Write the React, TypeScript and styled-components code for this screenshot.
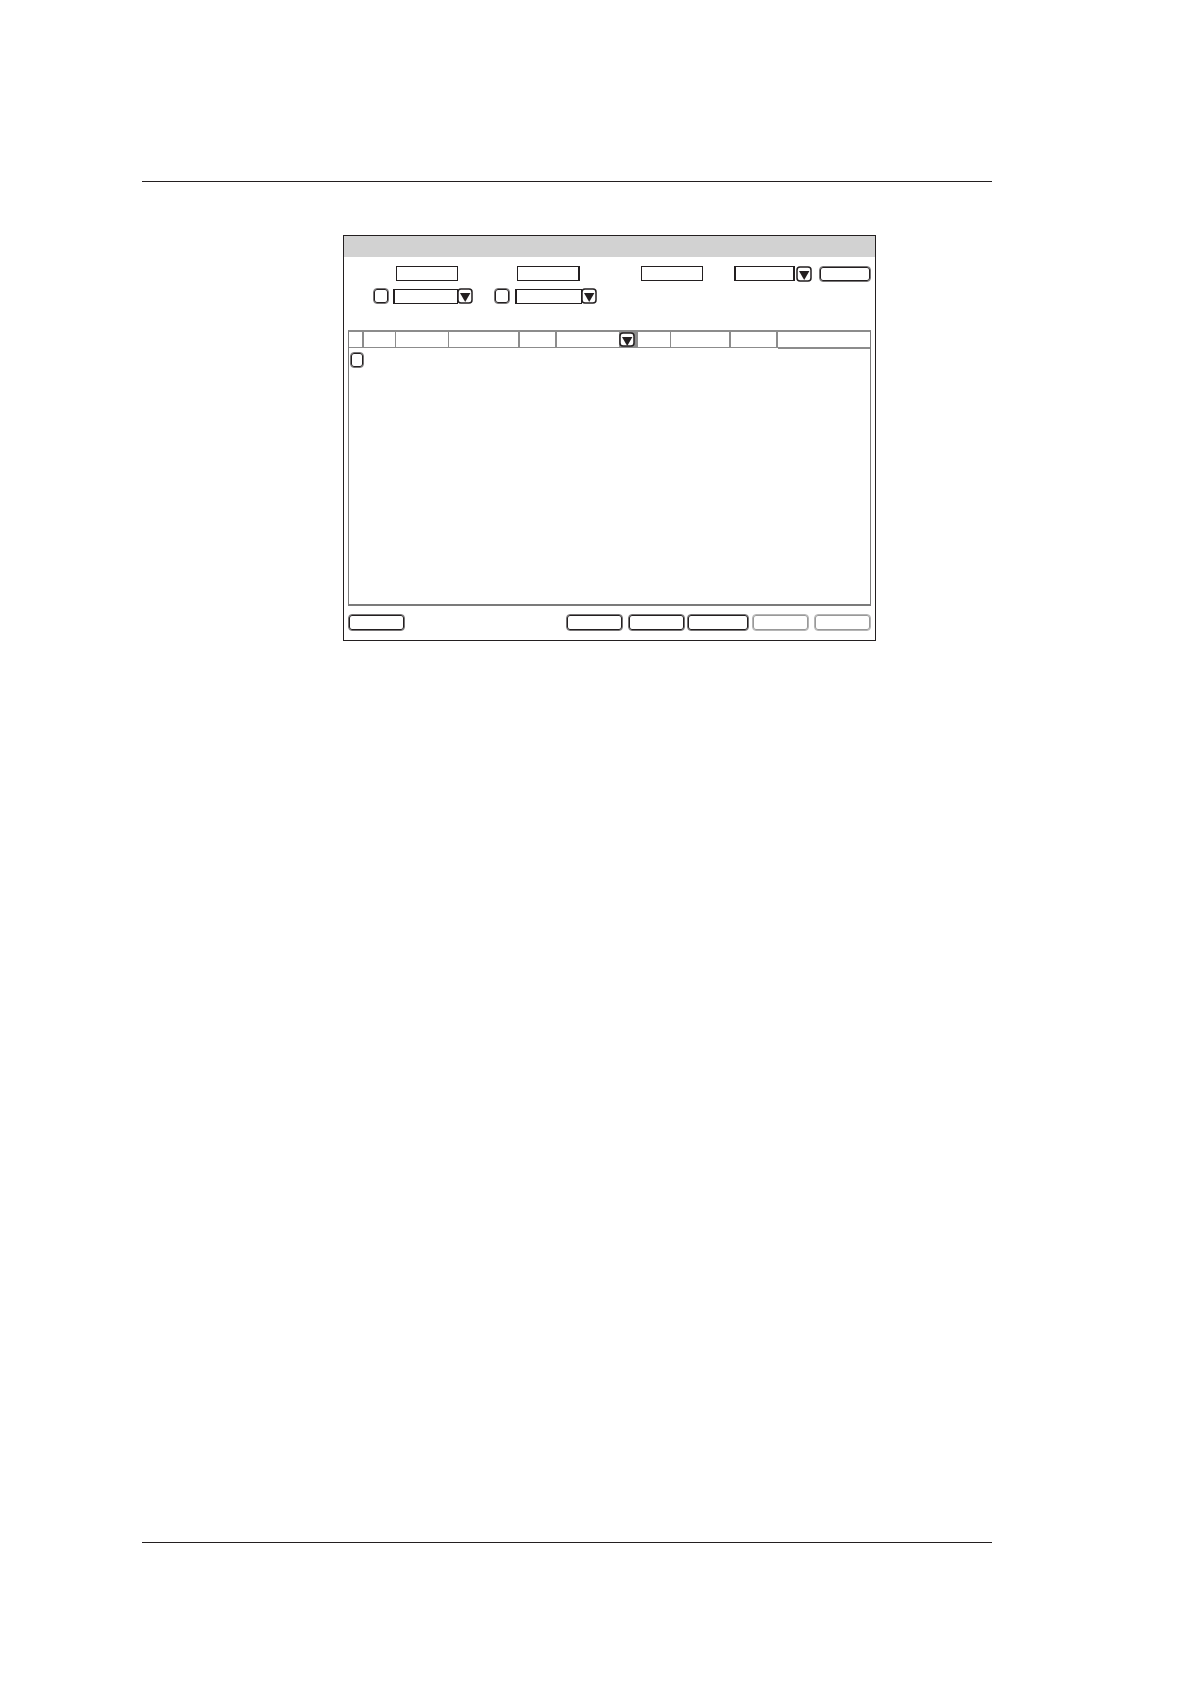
import React from "react";
import styled, { createGlobalStyle } from "styled-components";

const ink = "#231f20";
const soft = "#777576";
const line = "#8c8c8c";

const GlobalStyle = createGlobalStyle`
  *, *::before, *::after { box-sizing: border-box; }
  body { margin: 0; background: #fff; font-family: "Liberation Sans", Arial, sans-serif; font-size: 10px; }
`;

const Sheet = styled.div`
  display: flex;
  flex-direction: column;
  min-height: 100vh;
  padding: 181px 199px 141px 142px;
`;

const Rule = styled.hr`
  width: 100%;
  height: 1px;
  margin: 0;
  border: 0;
  background: ${ink};
`;

const Content = styled.main`
  flex: 1;
  padding: 53px 116px 0 201px;
`;

const Dialog = styled.section`
  border: 1px solid ${ink};
  background: #fff;
`;

const TitleBar = styled.header`
  height: 21px;
  background: #d2d2d2;
`;

const Filters = styled.form`
  display: grid;
  row-gap: 6px;
  padding: 9px 4px 26px;
`;

const FilterRow = styled.div<{ $columns: string; $align: "start" | "end" }>`
  display: grid;
  grid-template-columns: ${(p) => p.$columns};
  align-items: ${(p) => p.$align};
  height: 16px;
`;

const Cell = styled.div<{ $column: string }>`
  grid-column: ${(p) => p.$column};
  display: flex;
`;

const TextField = styled.input<{ $edges?: string }>`
  width: 100%;
  min-width: 0;
  height: 15px;
  margin: 0;
  padding: 0 3px;
  border: solid ${ink};
  border-width: ${(p) => p.$edges ?? "1px"};
  border-radius: 0;
  background: transparent;
  font: inherit;
`;

const DropdownBox = styled.div<{ $align: "start" | "end" }>`
  position: relative;
  display: flex;
  align-items: ${(p) => p.$align};
  width: 100%;
`;

const DropdownFace = styled.span<{ $edges: string; $gap?: boolean }>`
  flex: 1;
  height: 15px;
  margin-right: ${(p) => (p.$gap ? "1px" : "-1px")};
  border: solid ${ink};
  border-width: ${(p) => p.$edges};
`;

const DropdownSelect = styled.select`
  position: absolute;
  inset: 0;
  width: 100%;
  height: 100%;
  margin: 0;
  padding: 0 20px 0 3px;
  appearance: none;
  border: 0;
  background: transparent;
  font: inherit;
`;

const ArrowSvg = styled.svg`
  display: block;
  flex: none;
`;

const Tick = styled.input`
  display: block;
  width: 100%;
  height: 16px;
  margin: 0;
  appearance: none;
  border: 1px solid ${soft};
  border-radius: 4px;
  box-shadow: inset 0 0 0 1px ${ink};
  background: #fff;

  &:checked { background: ${ink}; }
`;

const PushButton = styled.button<{ $width?: number; $height?: number }>`
  width: ${(p) => (p.$width ? `${p.$width}px` : "100%")};
  height: ${(p) => p.$height ?? 17}px;
  padding: 0;
  border: 1px solid ${soft};
  border-radius: 4px;
  box-shadow: inset 0 0 0 1px ${ink};
  background: #fff;
  font: inherit;

  &:disabled {
    border-color: #b5b5b5;
    box-shadow: inset 0 0 0 1px #999;
  }
`;

const TableArea = styled.div`
  padding: 0 4px;
`;

const DataTable = styled.table`
  width: 100%;
  table-layout: fixed;
  border-collapse: separate;
  border-spacing: 0;
  border: 1px solid #7b7b7b;
  border-top: 2px solid ${line};
  border-bottom: 2px solid #7b7b7b;
`;

const HeadCell = styled.th<{ $edge: number }>`
  height: 16px;
  padding: 0;
  border: 0 solid ${line};
  border-right-width: ${(p) => p.$edge}px;
  border-bottom-width: 1px;
  line-height: 0;

  &:last-child { box-shadow: 0 1px 0 ${line}; }
`;

const BodyCell = styled.td`
  height: 256px;
  padding: 4px 0 0 1px;
  vertical-align: top;
`;

const SortButton = styled.button`
  display: block;
  height: 15px;
  margin-left: auto;
  padding: 0 1px 0 0;
  border: 0;
  background: ${line};
`;

const Actions = styled.footer`
  display: flex;
  padding: 8px 4px 9px;
`;

const Group = styled.div<{ $gap: number }>`
  display: flex;
  gap: ${(p) => p.$gap}px;
`;

const ActionGroup = styled(Group)`
  margin-right: 3px;
  margin-left: auto;
`;

function Arrow({ height = 16 }: { height?: number }) {
  return (
    <ArrowSvg width="16" height={height} viewBox={`0 0 16 ${height}`} aria-hidden="true">
      <rect x="1" y="1" width="14" height={height - 2} rx="3" fill="#fff" stroke={ink} strokeWidth="1.5" />
      <path d="M3 5H13.4L8.2 14Z" fill={ink} />
    </ArrowSvg>
  );
}

type DropdownProps = { label: string; edges: string; gap?: boolean; align: "start" | "end" };

function Dropdown({ label, edges, gap, align }: DropdownProps) {
  return (
    <DropdownBox $align={align}>
      <DropdownFace $edges={edges} $gap={gap} />
      <Arrow />
      <DropdownSelect aria-label={label} />
    </DropdownBox>
  );
}

const columns = [
  { name: "Select", width: 15, edge: 2 },
  { name: "Status", width: 32, edge: 1 },
  { name: "ID", width: 53, edge: 1 },
  { name: "Name", width: 71, edge: 2 },
  { name: "Type", width: 37, edge: 2 },
  { name: "Date", width: 81, edge: 2, sort: true },
  { name: "Size", width: 33, edge: 1 },
  { name: "Location", width: 60, edge: 2 },
  { name: "Owner", width: 47, edge: 2 },
  { name: "Comments", edge: 0 },
];

export default function App() {
  return (
    <>
      <GlobalStyle />
      <Sheet>
        <Rule />
        <Content>
          <Dialog aria-label="Search">
            <TitleBar />
            <Filters onSubmit={(e) => e.preventDefault()}>
              <FilterRow $align="start" $columns="48fr 62fr 59fr 63fr 61fr 62fr 31fr 78fr 7fr 52fr">
                <Cell $column="2"><TextField aria-label="ID" /></Cell>
                <Cell $column="4"><TextField aria-label="Last name" $edges="1px 2px 1px 1px" /></Cell>
                <Cell $column="6"><TextField aria-label="First name" /></Cell>
                <Cell $column="8"><Dropdown label="Source" edges="1px 2px" gap align="start" /></Cell>
                <Cell $column="10"><PushButton type="submit" aria-label="Search" $height={16} /></Cell>
              </FilterRow>
              <FilterRow $align="end" $columns="25fr 16fr 4fr 80fr 21fr 16fr 5fr 82fr 274fr">
                <Cell $column="2"><Tick type="checkbox" aria-label="From" /></Cell>
                <Cell $column="4"><Dropdown label="From date" edges="1px 1px 1px 2px" align="end" /></Cell>
                <Cell $column="6"><Tick type="checkbox" aria-label="To" /></Cell>
                <Cell $column="8"><Dropdown label="To date" edges="1px 1px 1px 2px" align="end" /></Cell>
              </FilterRow>
            </Filters>
            <TableArea>
              <DataTable>
                <colgroup>
                  {columns.map((c) => <col key={c.name} width={c.width} />)}
                </colgroup>
                <thead>
                  <tr>
                    {columns.map((c) => (
                      <HeadCell key={c.name} scope="col" aria-label={c.name} $edge={c.edge}>
                        {c.sort && <SortButton type="button" aria-label="Sort"><Arrow height={15} /></SortButton>}
                      </HeadCell>
                    ))}
                  </tr>
                </thead>
                <tbody>
                  <tr>
                    <BodyCell><Tick type="checkbox" aria-label="Select row" /></BodyCell>
                    <BodyCell colSpan={9} />
                  </tr>
                </tbody>
              </DataTable>
            </TableArea>
            <Actions>
              <PushButton type="button" aria-label="Close" $width={57} />
              <ActionGroup $gap={2}>
                <Group $gap={5}>
                  <PushButton type="button" aria-label="Open" $width={57} />
                  <PushButton type="button" aria-label="Copy" $width={57} />
                </Group>
                <PushButton type="button" aria-label="Export" $width={62} />
              </ActionGroup>
              <Group $gap={5}>
                <PushButton type="button" aria-label="Delete" $width={57} disabled />
                <PushButton type="button" aria-label="Print" $width={57} disabled />
              </Group>
            </Actions>
          </Dialog>
        </Content>
        <Rule />
      </Sheet>
    </>
  );
}
